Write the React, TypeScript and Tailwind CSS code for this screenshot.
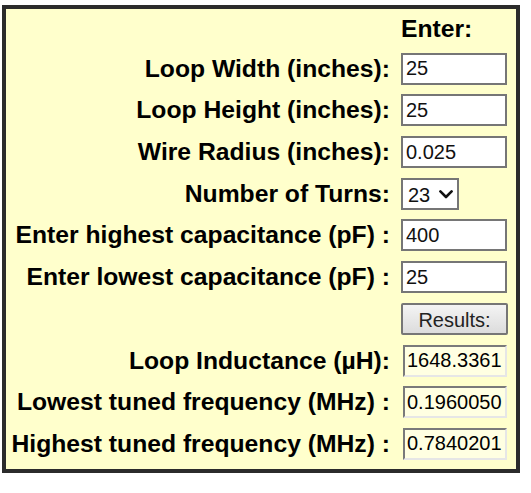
import React from "react";

const font = { fontFamily: '"Liberation Sans", Arial, Helvetica, sans-serif' };

function Label({ children }: { children: React.ReactNode }) {
  return (
    <div className="flex items-center justify-end text-[24.7px] font-bold leading-[28px] text-black whitespace-nowrap">
      {children}
    </div>
  );
}

function TextInput({ value }: { value: string }) {
  return (
    <input
      type="text"
      defaultValue={value}
      className="w-[106px] h-[32px] border-2 border-[#767676] bg-white px-[3px] text-[20px] text-[#111] outline-none"
      style={font}
    />
  );
}

function Output({ value }: { value: string }) {
  return (
    <input
      type="text"
      readOnly
      value={value}
      className="ml-[2px] w-[104px] h-[32px] border-2 border-t-[#7a7a7a] border-l-[#7a7a7a] border-b-[#e6e6e6] border-r-[#e6e6e6] bg-[#ffffe2] pl-[2px] text-[20px] text-black outline-none"
      style={font}
    />
  );
}

export default function App() {
  return (
    <div className="pt-[5px] pl-[2px]" style={font}>
      <div className="w-[518px] border-4 border-[#2b2b2b] bg-[#ffffcc] pt-[6px] pb-[9px]">
        <div className="grid grid-cols-[384px_1fr] gap-x-[11px] gap-y-[9.7px]">
          <div />
          <div className="text-[24.7px] font-bold leading-[28px] text-black">Enter:</div>

          <Label>Loop Width (inches):</Label>
          <div className="flex items-center">
            <TextInput value="25" />
          </div>

          <Label>Loop Height (inches):</Label>
          <div className="flex items-center">
            <TextInput value="25" />
          </div>

          <Label>Wire Radius (inches):</Label>
          <div className="flex items-center">
            <TextInput value="0.025" />
          </div>

          <Label>Number of Turns:</Label>
          <div className="flex items-center">
            <div className="relative w-[58px] h-[32px]">
              <select
                defaultValue="23"
                className="appearance-none w-full h-full border-2 border-[#767676] bg-white pl-[5px] text-[20px] text-[#111] outline-none"
                style={font}
              >
                {Array.from({ length: 40 }, (_, i) => (
                  <option key={i + 1} value={String(i + 1)}>
                    {i + 1}
                  </option>
                ))}
              </select>
              <svg
                className="pointer-events-none absolute left-[38px] top-[12px]"
                width="14"
                height="9"
                viewBox="0 0 14 9"
                fill="none"
              >
                <path d="M1.4 1.4 L7 7 L12.6 1.4" stroke="#111" strokeWidth="2.6" strokeLinecap="round" strokeLinejoin="round" />
              </svg>
            </div>
          </div>

          <Label>Enter highest capacitance (pF)&nbsp;:</Label>
          <div className="flex items-center">
            <TextInput value="400" />
          </div>

          <Label>Enter lowest capacitance (pF)&nbsp;:</Label>
          <div className="flex items-center">
            <TextInput value="25" />
          </div>

          <div />
          <div className="flex items-center">
            <button
              type="button"
              className="w-[107px] h-[32px] border-2 border-[#767676] rounded-[2px] bg-gradient-to-b from-[#f4f4f4] to-[#dcdcdc] text-[20px] text-[#222]"
              style={font}
            >
              Results:
            </button>
          </div>

          <Label>Loop Inductance (µH):</Label>
          <div className="flex items-center">
            <Output value="1648.3361" />
          </div>

          <Label>Lowest tuned frequency (MHz)&nbsp;:</Label>
          <div className="flex items-center">
            <Output value="0.1960050" />
          </div>

          <Label>Highest tuned frequency (MHz)&nbsp;:</Label>
          <div className="flex items-center">
            <Output value="0.7840201" />
          </div>
        </div>
      </div>
    </div>
  );
}
